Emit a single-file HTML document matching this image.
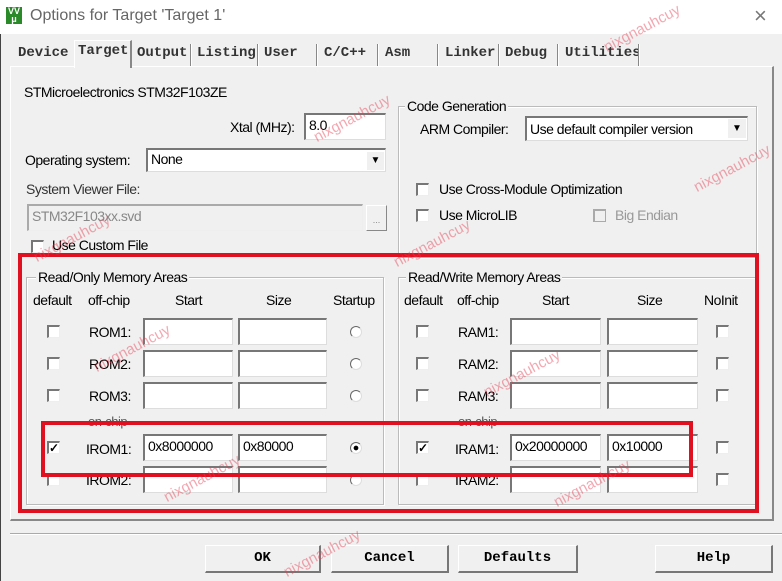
<!DOCTYPE html>
<html style="overflow:hidden;width:782px;height:581px"><head><meta charset="utf-8"><style>
*{box-sizing:border-box;margin:0;padding:0}
body{width:782px;height:581px;background:#f0f0f0;position:relative;overflow:hidden;font-family:"Liberation Sans",sans-serif;font-size:14px;color:#000}
.a{position:absolute;white-space:nowrap}
.tb{position:absolute;left:0;top:0;width:782px;height:34px;background:#fff}
.tab{position:absolute;top:45px;font-family:"Liberation Mono",monospace;font-weight:bold;font-size:14px;color:#333}
.sep{position:absolute;top:44px;width:2px;height:22px;border-left:1px solid #888;border-right:1px solid #fff}
.in{position:absolute;background:#fff;border-top:2px solid #777;border-left:2px solid #777;border-bottom:1px solid #ddd;border-right:1px solid #ddd;height:27px;font-size:14px;padding:2px 3px;letter-spacing:-0.5px}
.grp{position:absolute;border:1px solid #bbb;box-shadow:inset 1px 1px 0 #fff,1px 1px 0 #fff}
.gl{position:absolute;background:#f0f0f0;padding:0 2px;font-size:14px;letter-spacing:-0.5px}
.cb{position:absolute;width:13px;height:13px;background:#fff;border-top:2px solid #777;border-left:2px solid #777;border-right:1px solid #eee;border-bottom:1px solid #eee;font-size:12px;line-height:10px;text-align:center;font-weight:bold}
.rd{position:absolute;width:12px;height:12px;border-radius:50%;border-top:1.5px solid #666;border-left:1.5px solid #666;border-right:1px solid #ddd;border-bottom:1px solid #ddd;background:#fff}
.btn{position:absolute;top:545px;height:28px;background:#f0f0f0;border:1px solid #fff;border-right:2px solid #777;border-bottom:2px solid #777;font-family:"Liberation Mono",monospace;font-weight:bold;font-size:14px;text-align:center;line-height:24px}
.red{position:absolute;border:4px solid #e01020}
.wm{position:absolute;color:rgba(230,60,80,0.45);font-size:15px;transform:rotate(-28deg);white-space:nowrap}
.t{letter-spacing:-0.5px}
</style></head><body>
<div class="tb"></div>
<div class="a" style="left:6px;top:7px;width:16px;height:17px;background:#2a8a2a;color:#fff;font-size:9px;font-weight:bold;line-height:8px;text-align:center">VV<br>μ</div>
<div class="a" style="left:30px;top:7px;font-size:16px;color:#666">Options for Target 'Target 1'</div>
<div class="a" style="left:754px;top:3px;font-size:22px;color:#777">×</div>
<div class="a" style="left:0;top:34px;width:1px;height:547px;background:#444"></div>

<div class="a" style="left:10px;top:66px;width:764px;height:455px;border:1px solid #fff;border-right:2px solid #888;border-bottom:2px solid #888"></div>
<div class="a" style="left:74px;top:40px;width:58px;height:28px;background:#f0f0f0;border:1px solid #fff;border-bottom:none;border-right:2px solid #888"></div>
<span class="tab" style="left:18px">Device</span>
<span class="tab" style="left:78px;top:43px">Target</span>
<span class="tab" style="left:137px">Output</span><div class="sep" style="left:190px"></div>
<span class="tab" style="left:197px">Listing</span><div class="sep" style="left:257px"></div>
<span class="tab" style="left:264px">User</span><div class="sep" style="left:316px"></div>
<span class="tab" style="left:324px">C/C++</span><div class="sep" style="left:377px"></div>
<span class="tab" style="left:385px">Asm</span><div class="sep" style="left:437px"></div>
<span class="tab" style="left:445px">Linker</span><div class="sep" style="left:498px"></div>
<span class="tab" style="left:505px">Debug</span><div class="sep" style="left:557px"></div>
<span class="tab" style="left:565px">Utilities</span><div class="sep" style="left:638px"></div>

<div class="a t" style="left:24px;top:84px">STMicroelectronics STM32F103ZE</div>
<div class="a t" style="left:230px;top:119px">Xtal (MHz):</div>
<div class="in" style="left:304px;top:113px;width:82px">8.0</div>
<div class="a t" style="left:25px;top:152px">Operating system:</div>
<div class="in" style="left:146px;top:148px;width:240px;height:24px;padding-top:1px">None</div>
<div class="a" style="left:367px;top:152px;width:17px;height:18px;background:#f0f0f0;font-size:10px;text-align:center;line-height:18px">▼</div>
<div class="a t" style="left:26px;top:181px;color:#333">System Viewer File:</div>
<div class="in" style="left:27px;top:204px;width:336px;background:#f0f0f0;color:#888;border-color:#aaa #eee #eee #aaa">STM32F103xx.svd</div>
<div class="a" style="left:366px;top:205px;width:21px;height:26px;border:1px solid #fff;border-right:1px solid #888;border-bottom:1px solid #888;font-size:9px;color:#888;text-align:center;line-height:28px">...</div>
<div class="cb" style="left:31px;top:240px"></div>
<div class="a t" style="left:52px;top:237px">Use Custom File</div>

<div class="grp" style="left:398px;top:106px;width:359px;height:152px"></div>
<div class="gl" style="left:405px;top:98px">Code Generation</div>
<div class="a t" style="left:420px;top:121px">ARM Compiler:</div>
<div class="in" style="left:525px;top:116px;width:223px;height:25px;padding-top:3px">Use default compiler version</div>
<div class="a" style="left:728px;top:119px;width:18px;height:19px;background:#f0f0f0;font-size:10px;text-align:center;line-height:19px">▼</div>
<div class="cb" style="left:416px;top:183px"></div><div class="a t" style="left:439px;top:181px">Use Cross-Module Optimization</div>
<div class="cb" style="left:416px;top:209px"></div><div class="a t" style="left:439px;top:207px">Use MicroLIB</div>
<div class="cb" style="left:593px;top:209px;background:#f0f0f0;border-color:#aaa"></div><div class="a t" style="left:615px;top:207px;color:#999">Big Endian</div>

<div class="grp" style="left:26px;top:277px;width:358px;height:228px"></div>
<div class="gl" style="left:36px;top:269px">Read/Only Memory Areas</div>
<div class="a t" style="left:33px;top:292px">default</div>
<div class="a t" style="left:88px;top:292px">off-chip</div>
<div class="a t" style="left:175px;top:292px">Start</div>
<div class="a t" style="left:266px;top:292px">Size</div>
<div class="a t" style="left:333px;top:292px">Startup</div>

<div class="grp" style="left:398px;top:277px;width:358px;height:228px"></div>
<div class="gl" style="left:406px;top:269px">Read/Write Memory Areas</div>
<div class="a t" style="left:404px;top:292px">default</div>
<div class="a t" style="left:457px;top:292px">off-chip</div>
<div class="a t" style="left:542px;top:292px">Start</div>
<div class="a t" style="left:637px;top:292px">Size</div>
<div class="a t" style="left:704px;top:292px">NoInit</div>

<div class="cb" style="left:47px;top:325px"></div><div class="a t" style="left:89px;top:324px">ROM1:</div>
<div class="in" style="left:143px;top:318px;width:90px"></div><div class="in" style="left:238px;top:318px;width:89px"></div><div class="rd" style="left:350px;top:326px"></div>
<div class="cb" style="left:47px;top:357px"></div><div class="a t" style="left:89px;top:356px">ROM2:</div>
<div class="in" style="left:143px;top:350px;width:90px"></div><div class="in" style="left:238px;top:350px;width:89px"></div><div class="rd" style="left:350px;top:358px"></div>
<div class="cb" style="left:47px;top:389px"></div><div class="a t" style="left:89px;top:388px">ROM3:</div>
<div class="in" style="left:143px;top:382px;width:90px"></div><div class="in" style="left:238px;top:382px;width:89px"></div><div class="rd" style="left:350px;top:390px"></div>
<div class="a t" style="left:88px;top:414px;color:#555;font-size:13px">on-chip</div>
<div class="cb" style="left:47px;top:441px">✓</div><div class="a t" style="left:86px;top:441px">IROM1:</div>
<div class="in" style="left:143px;top:434px;width:90px">0x8000000</div><div class="in" style="left:238px;top:434px;width:89px">0x80000</div><div class="rd" style="left:350px;top:442px;background:radial-gradient(#000 30%,#fff 36%)"></div>
<div class="cb" style="left:47px;top:473px"></div><div class="a t" style="left:86px;top:472px">IROM2:</div>
<div class="in" style="left:143px;top:466px;width:90px"></div><div class="in" style="left:238px;top:466px;width:89px"></div><div class="rd" style="left:350px;top:474px"></div>

<div class="cb" style="left:416px;top:325px"></div><div class="a t" style="left:458px;top:324px">RAM1:</div>
<div class="in" style="left:510px;top:318px;width:91px"></div><div class="in" style="left:607px;top:318px;width:91px"></div><div class="cb" style="left:716px;top:325px"></div>
<div class="cb" style="left:416px;top:357px"></div><div class="a t" style="left:458px;top:356px">RAM2:</div>
<div class="in" style="left:510px;top:350px;width:91px"></div><div class="in" style="left:607px;top:350px;width:91px"></div><div class="cb" style="left:716px;top:357px"></div>
<div class="cb" style="left:416px;top:389px"></div><div class="a t" style="left:458px;top:388px">RAM3:</div>
<div class="in" style="left:510px;top:382px;width:91px"></div><div class="in" style="left:607px;top:382px;width:91px"></div><div class="cb" style="left:716px;top:389px"></div>
<div class="a t" style="left:458px;top:414px;color:#555;font-size:13px">on-chip</div>
<div class="cb" style="left:416px;top:441px">✓</div><div class="a t" style="left:455px;top:441px">IRAM1:</div>
<div class="in" style="left:510px;top:434px;width:91px">0x20000000</div><div class="in" style="left:607px;top:434px;width:91px">0x10000</div><div class="cb" style="left:716px;top:441px"></div>
<div class="cb" style="left:416px;top:473px"></div><div class="a t" style="left:455px;top:472px">IRAM2:</div>
<div class="in" style="left:510px;top:466px;width:91px"></div><div class="in" style="left:607px;top:466px;width:91px"></div><div class="cb" style="left:716px;top:473px"></div>

<div class="red" style="left:18px;top:253px;width:741px;height:260px"></div>
<div class="red" style="left:41px;top:421px;width:652px;height:56px"></div>

<div class="a" style="left:10px;top:533px;width:772px;height:2px;border-top:1px solid #aaa;border-bottom:1px solid #fff"></div>
<div class="btn" style="left:205px;width:116px">OK</div>
<div class="btn" style="left:331px;width:118px">Cancel</div>
<div class="btn" style="left:458px;width:120px">Defaults</div>
<div class="btn" style="left:655px;width:118px">Help</div>

<div class="wm" style="left:600px;top:20px">nixgnauhcuy</div>
<div class="wm" style="left:310px;top:110px">nixgnauhcuy</div>
<div class="wm" style="left:690px;top:160px">nixgnauhcuy</div>
<div class="wm" style="left:30px;top:230px">nixgnauhcuy</div>
<div class="wm" style="left:390px;top:235px">nixgnauhcuy</div>
<div class="wm" style="left:90px;top:340px">nixgnauhcuy</div>
<div class="wm" style="left:480px;top:365px">nixgnauhcuy</div>
<div class="wm" style="left:160px;top:470px">nixgnauhcuy</div>
<div class="wm" style="left:550px;top:475px">nixgnauhcuy</div>
<div class="wm" style="left:280px;top:545px">nixgnauhcuy</div>
</body></html>
